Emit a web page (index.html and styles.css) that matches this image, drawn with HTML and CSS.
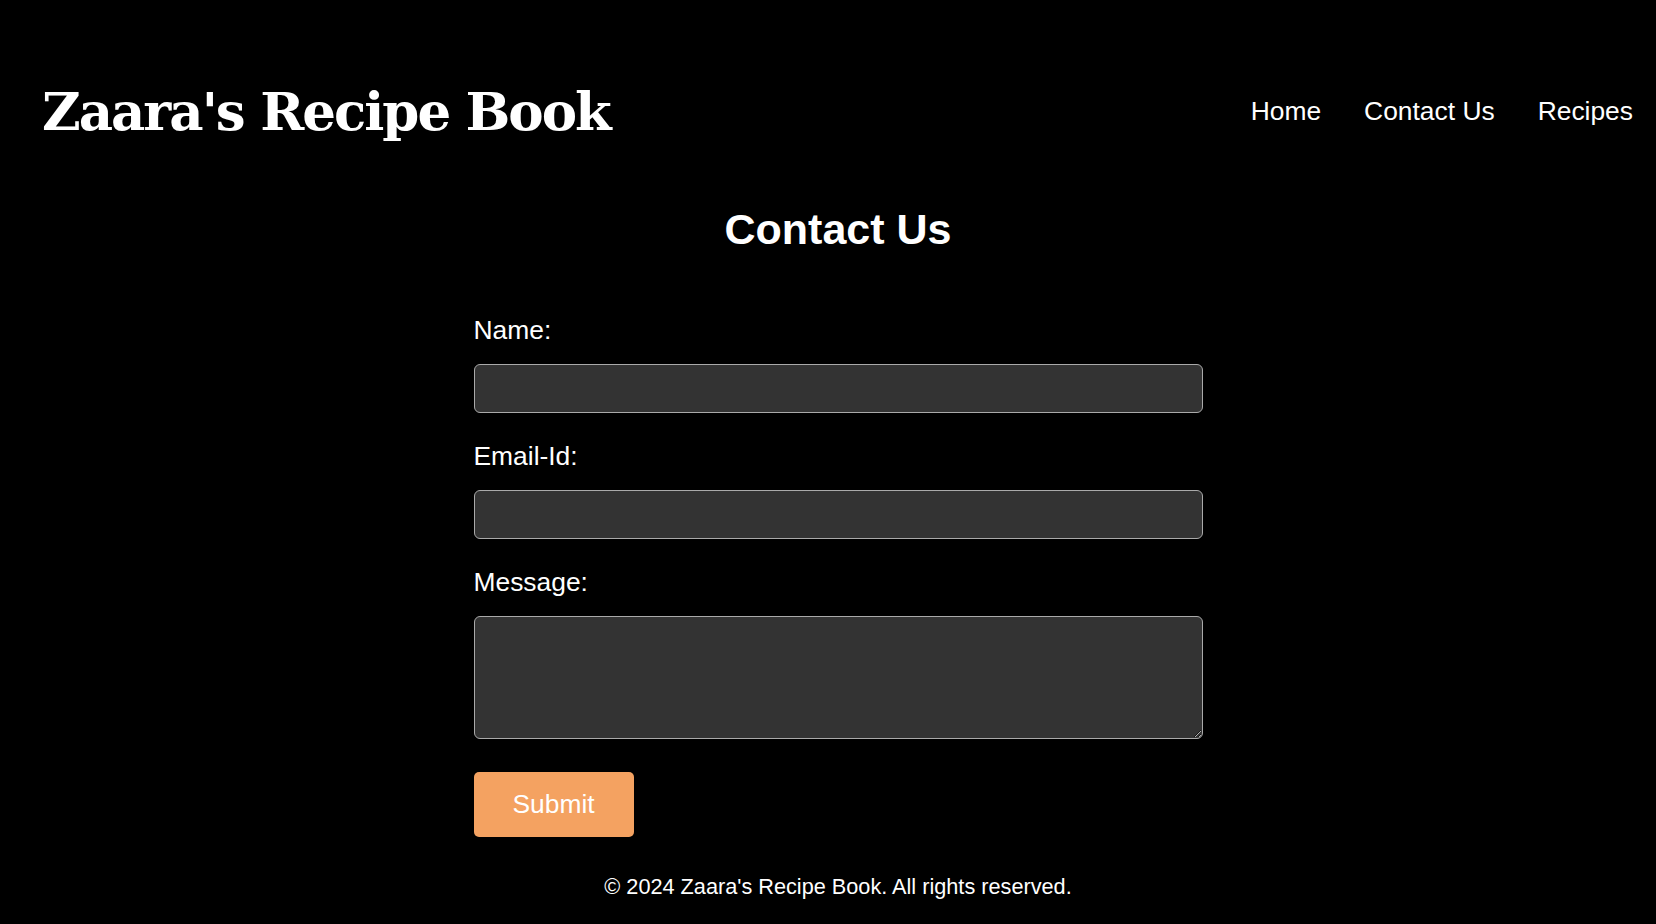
FILE: index.html
```html
<!DOCTYPE html>
<html lang="en">
<head>
<meta charset="utf-8">
<title>Contact Us - Zaara's Recipe Book</title>
<link rel="stylesheet" href="styles.css">
</head>
<body>
<header class="site-header">
  <h1 class="brand">Zaara's Recipe Book</h1>
  <nav class="nav">
    <a href="#" class="nav-link">Home</a>
    <a href="#" class="nav-link">Contact Us</a>
    <a href="#" class="nav-link">Recipes</a>
  </nav>
</header>
<main class="main">
  <h2 class="page-title">Contact Us</h2>
  <form class="contact-form">
    <label class="field-label" for="name">Name:</label>
    <input class="field-input" type="text" id="name">
    <label class="field-label" for="email">Email-Id:</label>
    <input class="field-input" type="email" id="email">
    <label class="field-label" for="message">Message:</label>
    <textarea class="field-textarea" id="message"></textarea>
    <button class="submit-btn" type="button">Submit</button>
  </form>
</main>
<footer class="site-footer">
  <p class="copyright">&copy; 2024 Zaara's Recipe Book. All rights reserved.</p>
</footer>
</body>
</html>
```
FILE: styles.css
```css
html, body {
  margin: 0;
  padding: 0;
  background: #000;
  color: #fff;
  font-family: "Liberation Sans", Arial, sans-serif;
}

.site-header {
  display: flex;
  justify-content: space-between;
  align-items: center;
  padding: 72px 23px 0 42px;
}

.brand {
  margin: 0;
  font-family: "DejaVu Serif", Georgia, serif;
  font-weight: bold;
  font-size: 53px;
  line-height: 78px;
  letter-spacing: -2px;
  color: #fff;
}

.nav {
  display: flex;
  gap: 43px;
}

.nav-link {
  color: #fff;
  text-decoration: none;
  font-size: 26.4px;
  line-height: 30px;
}

.main {
  width: 729px;
  margin: 0 auto;
  padding-left: 20px;
}

.page-title {
  margin: 55px 0 61px;
  text-align: center;
  font-size: 43px;
  line-height: 49px;
  font-weight: bold;
}

.contact-form {
  display: flex;
  flex-direction: column;
  align-items: flex-start;
}

.field-label {
  display: block;
  font-size: 26.4px;
  line-height: 30px;
  margin-bottom: 19px;
}

.field-input,
.field-textarea {
  box-sizing: border-box;
  width: 100%;
  background: #333;
  color: #fff;
  border: 1.5px solid #aaa;
  border-radius: 6px;
  font-family: inherit;
  font-size: 22px;
  margin: 0 0 28px;
}

.field-input {
  height: 49px;
}

.field-textarea {
  height: 123px;
  margin-bottom: 33px;
  resize: vertical;
}

.submit-btn {
  background: #f4a261;
  color: #fff;
  border: none;
  border-radius: 5px;
  font-family: inherit;
  font-size: 26.4px;
  line-height: 30px;
  padding: 17px 39px 18px;
  cursor: pointer;
}

.site-footer {
  text-align: center;
  padding-left: 20px;
}

.copyright {
  margin: 37px 0 0;
  font-size: 21.7px;
  line-height: 25px;
}
```
